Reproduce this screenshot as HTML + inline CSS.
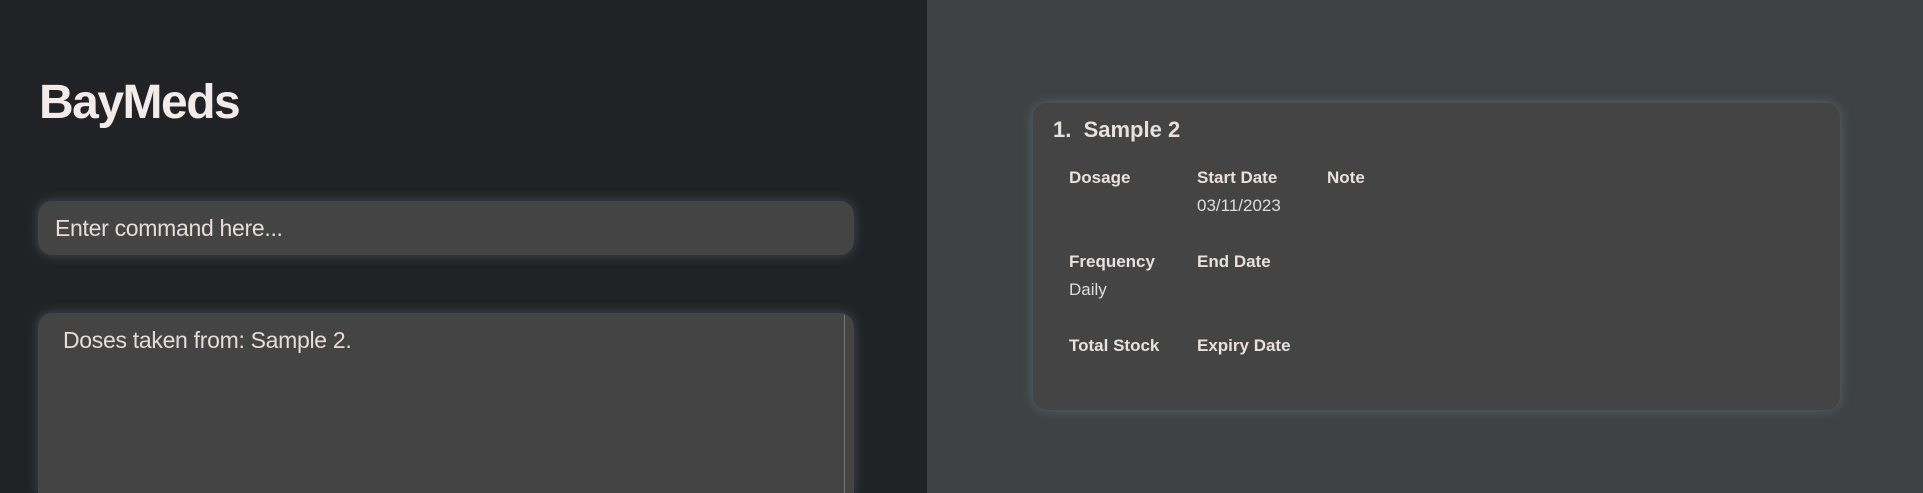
<!DOCTYPE html>
<html><head><style>
html,body{margin:0;width:1923px;height:493px;overflow:hidden}
body{font-family:"Liberation Sans",sans-serif;background:#3e4245;position:relative}
.left{position:absolute;left:0;top:0;width:927px;height:493px;background:#212226;overflow:hidden}
.title{position:absolute;left:39px;top:75px;font-size:48px;font-weight:bold;color:#f3ebe8;letter-spacing:-1.5px}
.cmd{position:absolute;left:38px;top:201px;width:816px;height:54px;background:#444;border-radius:14px;box-shadow:0 0 12px rgba(110,125,135,.45)}
.cmd span{position:absolute;left:17px;top:14px;font-size:23px;color:#e6dcd8;letter-spacing:-.3px}
.res{position:absolute;left:38px;top:313px;width:816px;height:180px;background:#444;border-radius:14px 14px 0 0;box-shadow:0 0 12px rgba(110,125,135,.45)}
.res span{position:absolute;left:25px;top:14px;font-size:23px;color:#e6dcd8;letter-spacing:-.3px}
.res i{position:absolute;left:806px;top:2px;width:1px;height:178px;background:#777}
.card{position:absolute;left:1033px;top:103px;width:807px;height:307px;background:#444;border-radius:14px;box-shadow:0 0 12px rgba(120,135,145,.5);color:#e8e0dc}
.card div{position:absolute;white-space:nowrap}
.h{font-size:22px;font-weight:bold;top:14px;left:20px}
.l{font-size:17px;font-weight:bold}
.v{font-size:17px;color:#ddd}
</style></head><body>
<div class="left">
<div class="title">BayMeds</div>
<div class="cmd"><span>Enter command here...</span></div>
<div class="res"><span>Doses taken from: Sample 2.</span><i></i></div>
</div>
<div class="card">
<div class="h">1.&nbsp; Sample 2</div>
<div class="l" style="left:36px;top:65px">Dosage</div>
<div class="l" style="left:164px;top:65px">Start Date</div>
<div class="l" style="left:294px;top:65px">Note</div>
<div class="v" style="left:164px;top:93px">03/11/2023</div>
<div class="l" style="left:36px;top:149px">Frequency</div>
<div class="l" style="left:164px;top:149px">End Date</div>
<div class="v" style="left:36px;top:177px">Daily</div>
<div class="l" style="left:36px;top:233px">Total Stock</div>
<div class="l" style="left:164px;top:233px">Expiry Date</div>
</div>
</body></html>
